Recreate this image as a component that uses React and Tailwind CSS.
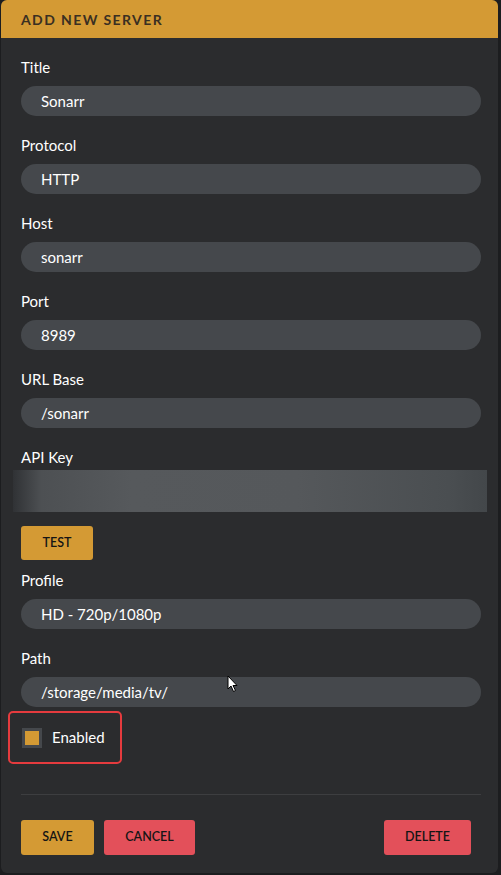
import React from 'react';

const fields = [
  { label: 'Title', value: 'Sonarr' },
  { label: 'Protocol', value: 'HTTP' },
  { label: 'Host', value: 'sonarr' },
  { label: 'Port', value: '8989' },
  { label: 'URL Base', value: '/sonarr' },
];

function Field({ label, value }) {
  return (
    <div className="pb-[19px]">
      <div className="h-5 text-[15px] leading-5 text-white">{label}</div>
      <div className="mt-[9px] flex h-[30px] items-center rounded-full bg-[#45484c] px-5 text-[15px] text-white">
        {value}
      </div>
    </div>
  );
}

function Cursor() {
  return (
    <svg width="12" height="18" viewBox="0 0 12 18" className="absolute left-[227px] top-[675px]">
      <path d="M1 1 L1 14 L4 11 L6.5 16.5 L8.5 15.5 L6 10.5 L10 10.5 Z" fill="#fff" stroke="#000" strokeWidth="1" strokeLinejoin="round" />
    </svg>
  );
}

export default function App() {
  return (
    <div className="relative min-h-[875px] w-[501px] bg-[#1c1d1f] pl-px pr-[3px] font-['Lato',_'Noto_Sans',_sans-serif]">
      <div className="h-[873px] overflow-hidden rounded-md bg-[#2b2c2e]">
        <div className="flex h-[38px] items-center bg-[#d49a34] px-5 text-[14px] font-bold tracking-[0.1em] text-[#3a2f22]">
          ADD NEW SERVER
        </div>

        <div className="pl-5 pr-[17px] pt-[19px]">
          {fields.map((f) => (
            <Field key={f.label} {...f} />
          ))}

          <div className="h-5 text-[15px] leading-5 text-white">API Key</div>
        </div>
        <div className="ml-3 mr-[11px] mt-[3px] h-[42px] bg-[linear-gradient(90deg,#303235_0%,#4d5053_6%,#56595c_25%,#55585b_60%,#4a4e51_92%,#43474a_100%)]" />

        <div className="pl-5 pr-[17px]">
          <button className="mt-[14px] flex h-[34px] w-[72px] items-center justify-center rounded-[3px] bg-[#d49a34] text-[12.5px] font-semibold text-[#151515]">
            TEST
          </button>
          <div className="mt-[10px]">
            <Field label="Profile" value="HD - 720p/1080p" />
            <div className="-mb-[15px]">
              <Field label="Path" value="/storage/media/tv/" />
            </div>
          </div>
        </div>

        <div className="ml-[7px] flex h-[53px] w-[114px] items-center gap-[10px] rounded-[5px] border-2 border-[#e53b3e] pl-[12px]">
          <div className="flex h-5 w-5 items-center justify-center bg-[#45484c]">
            <div className="h-[14px] w-[14px] bg-[#d49a34]" />
          </div>
          <span className="text-[15px] text-white">Enabled</span>
        </div>

        <div className="ml-5 mr-[17px] mt-[30px] h-px bg-[#3d3e40]" />

        <div className="mt-[25px] flex items-center pl-5 pr-[17px]">
          <button className="flex h-[35px] w-[73px] items-center justify-center rounded-[3px] bg-[#d49a34] text-[12.5px] font-semibold text-[#151515]">
            SAVE
          </button>
          <button className="ml-[10px] flex h-[35px] w-[91px] items-center justify-center rounded-[3px] bg-[#e3505a] text-[12.5px] font-semibold text-[#151515]">
            CANCEL
          </button>
          <button className="ml-auto mr-[10px] flex h-[35px] w-[87px] items-center justify-center rounded-[3px] bg-[#e3505a] text-[12.5px] font-semibold text-[#151515]">
            DELETE
          </button>
        </div>
      </div>
      <Cursor />
    </div>
  );
}
